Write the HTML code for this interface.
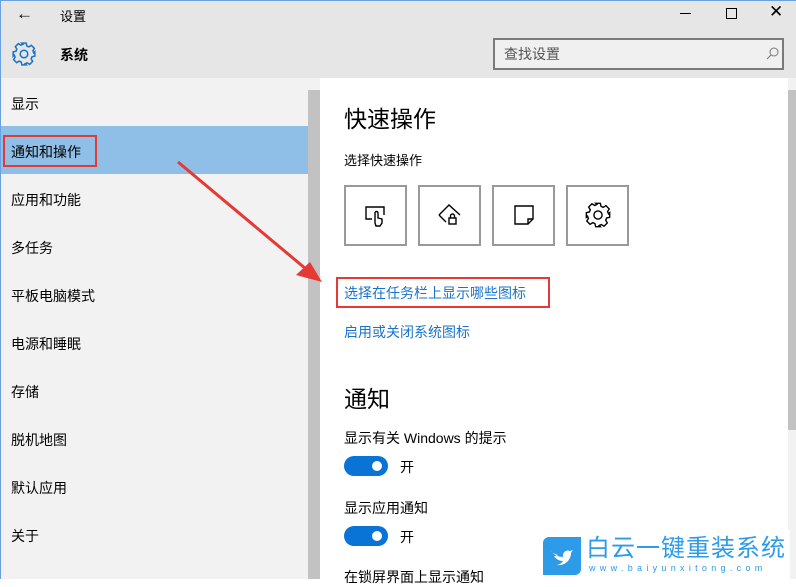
<!DOCTYPE html>
<html><head><meta charset="utf-8"><style>
*{margin:0;padding:0;box-sizing:border-box}
body{width:796px;height:579px;overflow:hidden;background:#fff;font-family:"Liberation Sans","Noto Sans CJK SC",sans-serif;position:relative;color:#000}
.a{position:absolute;white-space:nowrap}
.nav{font-size:14px;left:11px}
.t{font-size:14px;left:344px}
.lnk{color:#1a73c8;font-size:14px}
.box{position:absolute;top:185px;width:63px;height:61px;border:2px solid #999;background:#fff}
.tog{position:absolute;left:344px;width:44px;height:20px;border-radius:10px;background:#0a74d6}
.tog:after{content:"";position:absolute;right:6px;top:5px;width:10px;height:10px;border-radius:50%;background:#fff}
</style></head><body>
<div class="a" style="left:0;top:0;width:796px;height:78px;background:#e6e6e6"></div>
<div class="a" style="left:0;top:0;width:796px;height:1px;background:#6aa0e0"></div>
<div class="a" style="left:0;top:0;width:1px;height:579px;background:#6aa0e0"></div>
<div class="a" style="left:16px;top:4px;font-size:17px">←</div>
<div class="a" style="left:60px;top:6px;font-size:13px">设置</div>
<div class="a" style="left:680px;top:13px;width:11px;height:1px;background:#000"></div>
<div class="a" style="left:726px;top:8px;width:11px;height:11px;border:1px solid #000"></div>
<div class="a" style="left:769px;top:2px;font-size:17px;font-weight:300">✕</div>
<svg class="a" style="left:11px;top:41px" width="26" height="26" viewBox="0 0 24 24" fill="none" stroke="#1a73c8" stroke-width="1.4"><path d="M10 2h4l.6 2.6 1.9.8 2.3-1.4 2.8 2.8-1.4 2.3.8 1.9L22 10v4l-2.6.6-.8 1.9 1.4 2.3-2.8 2.8-2.3-1.4-1.9.8L14 22h-4l-.6-2.6-1.9-.8-2.3 1.4-2.8-2.8 1.4-2.3-.8-1.9L2 14v-4l2.6-.6.8-1.9-1.4-2.3 2.8-2.8 2.3 1.4 1.9-.8z"/><circle cx="12" cy="12" r="3.5"/></svg>
<div class="a" style="left:60px;top:45px;font-size:14px;font-weight:bold">系统</div>
<div class="a" style="left:493px;top:38px;width:291px;height:32px;border:2px solid #7a7a7a;background:#f0f0f0"></div>
<div class="a" style="left:504px;top:44px;font-size:14px;color:#555">查找设置</div>
<svg class="a" style="left:766px;top:47px" width="13" height="13" viewBox="0 0 13 13" fill="none" stroke="#777" stroke-width="1"><circle cx="8" cy="5" r="4"/><path d="M5 8l-4 4"/></svg>

<div class="a" style="left:1px;top:78px;width:307px;height:501px;background:#f2f2f2"></div>
<div class="a" style="left:308px;top:78px;width:12px;height:501px;background:#f2f2f2"></div>
<div class="a" style="left:308px;top:90px;width:12px;height:489px;background:#c2c2c2"></div>
<div class="a" style="left:1px;top:126px;width:307px;height:48px;background:#8fbee6"></div>
<div class="a" style="left:3px;top:135px;width:94px;height:32px;border:2px solid #e53935"></div>
<div class="a nav" style="top:94px">显示</div>
<div class="a nav" style="top:142px">通知和操作</div>
<div class="a nav" style="top:190px">应用和功能</div>
<div class="a nav" style="top:238px">多任务</div>
<div class="a nav" style="top:286px">平板电脑模式</div>
<div class="a nav" style="top:334px">电源和睡眠</div>
<div class="a nav" style="top:382px">存储</div>
<div class="a nav" style="top:430px">脱机地图</div>
<div class="a nav" style="top:478px">默认应用</div>
<div class="a nav" style="top:526px">关于</div>

<div class="a" style="left:788px;top:78px;width:8px;height:501px;background:#f2f2f2"></div>
<div class="a" style="left:788px;top:90px;width:8px;height:340px;background:#c2c2c2"></div>

<div class="a" style="left:344px;top:100px;font-size:23px">快速操作</div>
<div class="a t" style="top:150px;font-size:13px">选择快速操作</div>
<div class="box" style="left:344px"></div>
<div class="box" style="left:418px"></div>
<div class="box" style="left:492px"></div>
<div class="box" style="left:566px"></div>
<svg class="a" style="left:362px;top:201px" width="28" height="28" viewBox="0 0 28 28" fill="none" stroke="#000" stroke-width="1.4"><path d="M10 18H4V6h18v8"/><path d="M13 22v-10a1.5 1.5 0 013 0v5l4 1v4l-2 3h-4z"/></svg>
<svg class="a" style="left:436px;top:201px" width="28" height="28" viewBox="0 0 28 28" fill="none" stroke="#000" stroke-width="1.4"><path d="M3 14L13 4l11 10"/><path d="M3 14l7 7"/><rect x="13" y="17" width="7" height="6"/><path d="M14.5 17v-2a2 2 0 014 0v2"/></svg>
<svg class="a" style="left:510px;top:201px" width="28" height="28" viewBox="0 0 28 28" fill="none" stroke="#000" stroke-width="1.4"><path d="M5 5h18v13l-5 5H5z"/><path d="M23 18h-5v5"/></svg>
<svg class="a" style="left:584px;top:201px" width="28" height="28" viewBox="0 0 24 24" fill="none" stroke="#000" stroke-width="1.2"><path d="M10 2h4l.6 2.6 1.9.8 2.3-1.4 2.8 2.8-1.4 2.3.8 1.9L22 10v4l-2.6.6-.8 1.9 1.4 2.3-2.8 2.8-2.3-1.4-1.9.8L14 22h-4l-.6-2.6-1.9-.8-2.3 1.4-2.8-2.8 1.4-2.3-.8-1.9L2 14v-4l2.6-.6.8-1.9-1.4-2.3 2.8-2.8 2.3 1.4 1.9-.8z"/><circle cx="12" cy="12" r="3.5"/></svg>

<div class="a" style="left:336px;top:277px;width:214px;height:31px;border:2px solid #e53935"></div>
<div class="a lnk" style="left:344px;top:283px">选择在任务栏上显示哪些图标</div>
<div class="a lnk" style="left:344px;top:322px">启用或关闭系统图标</div>

<div class="a" style="left:344px;top:380px;font-size:23px">通知</div>
<div class="a t" style="top:428px">显示有关 Windows 的提示</div>
<div class="tog" style="top:456px"></div>
<div class="a" style="left:400px;top:457px;font-size:14px">开</div>
<div class="a t" style="top:498px">显示应用通知</div>
<div class="tog" style="top:526px"></div>
<div class="a" style="left:400px;top:527px;font-size:14px">开</div>
<div class="a t" style="top:567px">在锁屏界面上显示通知</div>

<div class="a" style="left:540px;top:530px;width:250px;height:49px;background:rgba(255,255,255,0.85)"></div>
<svg class="a" style="left:543px;top:537px" width="38" height="38" viewBox="0 0 38 38"><path d="M0 6a6 6 0 016-6h32v32a6 6 0 01-6 6H0z" fill="#2d9be8"/><path d="M8 14c3 4 7 6 12 6-1-4 3-8 7-6l3-1-2 3c0 7-6 13-14 12 3-1 5-2 6-4-4 0-7-2-9-5 2 0 3 0 4-1-3-1-6-2-7-4z" fill="#fff"/></svg>
<div class="a" style="left:586px;top:535px;font-size:24px;color:#2d9be8;letter-spacing:1px;line-height:27px">白云一键重装系统</div>
<div class="a" style="left:589px;top:563px;font-size:9px;color:#2d9be8;letter-spacing:4.3px">www.baiyunxitong.com</div>

<svg class="a" style="left:0;top:0" width="796" height="579"><path d="M178 162L312 274" stroke="#e53935" stroke-width="3"/><path d="M322 282L296 275L310 262z" fill="#e53935"/></svg>
</body></html>
